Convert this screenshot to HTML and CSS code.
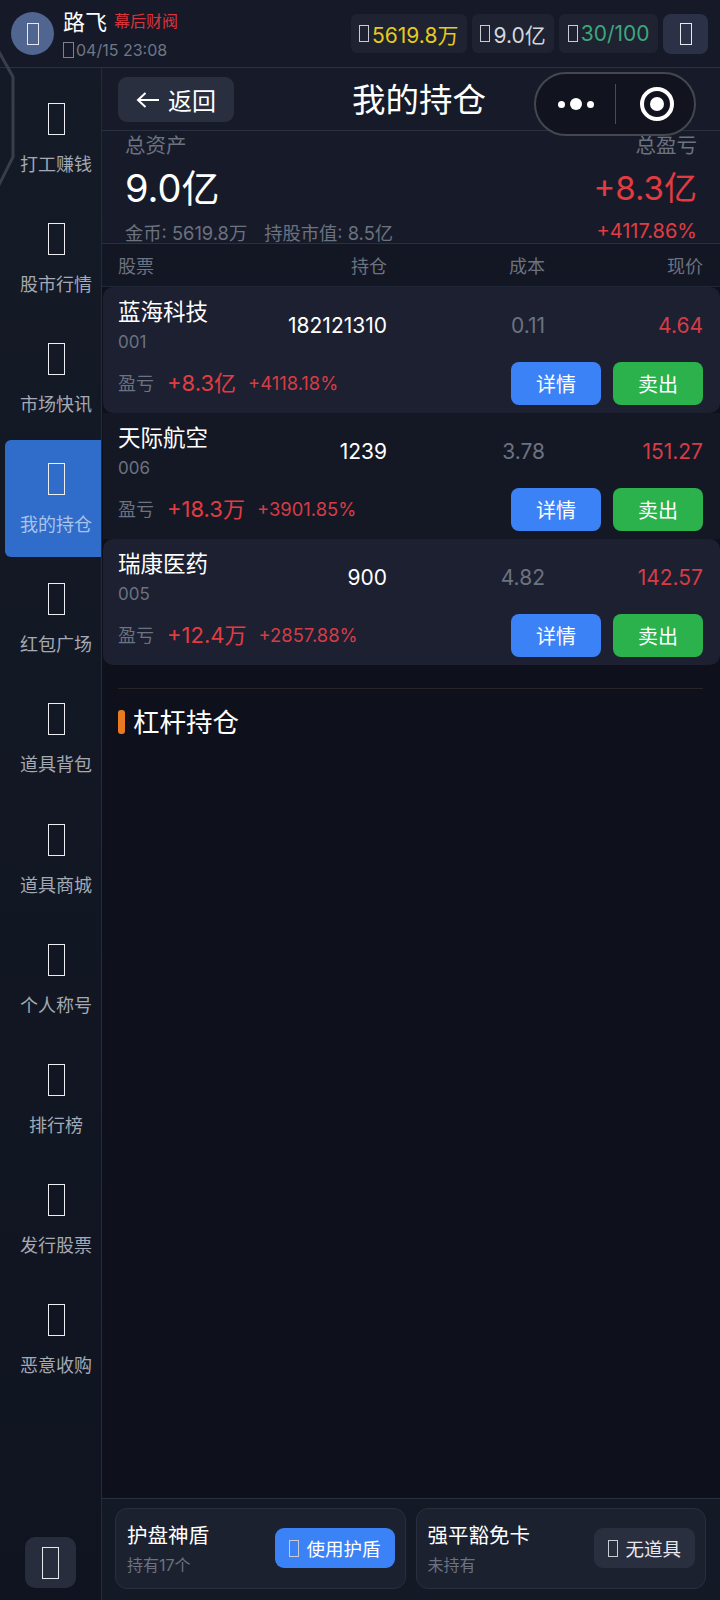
FILE: index.html
```html
<!DOCTYPE html>
<html lang="zh-CN">
<head>
    <meta charset="UTF-8">
    <title>我的持仓</title>
    <link rel="stylesheet" href="styles.css">
</head>
<body>
<div class="app">
    <svg class="octagon" width="16" height="140" viewBox="0 0 16 140">
        <path d="M-2 0 L13 27 V107 L-2 137" fill="none" stroke="#3a3e4a" stroke-width="3"/>
    </svg>

    <header class="topbar">
        <div class="avatar"><i class="tofu tofu-md"></i></div>
        <div class="user">
            <div class="user-line">
                <span class="user-name">路飞</span>
                <span class="user-tag">幕后财阀</span>
            </div>
            <div class="user-time"><i class="tofu tofu-xs"></i>04/15 23:08</div>
        </div>
        <div class="chips">
            <div class="chip chip-gold"><i class="tofu tofu-sm"></i>5619.8万</div>
            <div class="chip"><i class="tofu tofu-sm"></i>9.0亿</div>
            <div class="chip chip-green"><i class="tofu tofu-sm"></i>30/100</div>
            <div class="chip-btn"><i class="tofu tofu-md"></i></div>
        </div>
    </header>

    <div class="body">
        <nav class="sidebar">
            <a class="nav-item"><i class="tofu tofu-lg"></i><span>打工赚钱</span></a>
            <a class="nav-item"><i class="tofu tofu-lg"></i><span>股市行情</span></a>
            <a class="nav-item"><i class="tofu tofu-lg"></i><span>市场快讯</span></a>
            <a class="nav-item active"><i class="tofu tofu-lg"></i><span>我的持仓</span></a>
            <a class="nav-item"><i class="tofu tofu-lg"></i><span>红包广场</span></a>
            <a class="nav-item"><i class="tofu tofu-lg"></i><span>道具背包</span></a>
            <a class="nav-item"><i class="tofu tofu-lg"></i><span>道具商城</span></a>
            <a class="nav-item"><i class="tofu tofu-lg"></i><span>个人称号</span></a>
            <a class="nav-item"><i class="tofu tofu-lg"></i><span>排行榜</span></a>
            <a class="nav-item"><i class="tofu tofu-lg"></i><span>发行股票</span></a>
            <a class="nav-item"><i class="tofu tofu-lg"></i><span>恶意收购</span></a>
            <div class="side-btn"><i class="tofu tofu-lg"></i></div>
        </nav>

        <main class="main">
            <div class="titlebar">
                <a class="back">
                    <svg class="back-arrow" width="24" height="18" viewBox="0 0 24 18">
                        <path d="M23 9 H2 M9.5 2 L2 9 L9.5 16" fill="none" stroke="#fff" stroke-width="2"/>
                    </svg>返回
                </a>
                <h1 class="page-title">我的持仓</h1>
            </div>

            <section class="summary">
                <div class="summary-left">
                    <div class="label">总资产</div>
                    <div class="total">9.0亿</div>
                    <div class="sub">金币: 5619.8万<span class="sub-gap">持股市值: 8.5亿</span></div>
                </div>
                <div class="summary-right">
                    <div class="label">总盈亏</div>
                    <div class="total total-pl red">+8.3亿</div>
                    <div class="percent red">+4117.86%</div>
                </div>
            </section>

            <div class="table-head">
                <span>股票</span><span>持仓</span><span>成本</span><span>现价</span>
            </div>

            <article class="stock">
                <div class="stock-top">
                    <div class="stock-name">蓝海科技<small>001</small></div>
                    <div class="qty">182121310</div>
                    <div class="cost">0.11</div>
                    <div class="price">4.64</div>
                </div>
                <div class="stock-bottom">
                    <span class="pl-label">盈亏</span>
                    <span class="pl-value">+8.3亿</span>
                    <span class="pl-rate">+4118.18%</span>
                    <a class="btn btn-blue">详情</a>
                    <a class="btn btn-green">卖出</a>
                </div>
            </article>
            <article class="stock stock-alt">
                <div class="stock-top">
                    <div class="stock-name">天际航空<small>006</small></div>
                    <div class="qty">1239</div>
                    <div class="cost">3.78</div>
                    <div class="price">151.27</div>
                </div>
                <div class="stock-bottom">
                    <span class="pl-label">盈亏</span>
                    <span class="pl-value">+18.3万</span>
                    <span class="pl-rate">+3901.85%</span>
                    <a class="btn btn-blue">详情</a>
                    <a class="btn btn-green">卖出</a>
                </div>
            </article>
            <article class="stock">
                <div class="stock-top">
                    <div class="stock-name">瑞康医药<small>005</small></div>
                    <div class="qty">900</div>
                    <div class="cost">4.82</div>
                    <div class="price">142.57</div>
                </div>
                <div class="stock-bottom">
                    <span class="pl-label">盈亏</span>
                    <span class="pl-value">+12.4万</span>
                    <span class="pl-rate">+2857.88%</span>
                    <a class="btn btn-blue">详情</a>
                    <a class="btn btn-green">卖出</a>
                </div>
            </article>

            <div class="divider"></div>
            <h2 class="section-title">杠杆持仓</h2>

            <footer class="footer">
                <div class="prop">
                    <div class="prop-text">
                        <div class="prop-name">护盘神盾</div>
                        <div class="prop-sub">持有17个</div>
                    </div>
                    <a class="prop-btn prop-blue"><i class="tofu tofu-sm"></i>使用护盾</a>
                </div>
                <div class="prop">
                    <div class="prop-text">
                        <div class="prop-name">强平豁免卡</div>
                        <div class="prop-sub">未持有</div>
                    </div>
                    <a class="prop-btn prop-gray"><i class="tofu tofu-sm"></i>无道具</a>
                </div>
            </footer>
        </main>
    </div>

    <div class="capsule">
        <div class="capsule-dots"><b></b><b class="big"></b><b></b></div>
        <div class="capsule-line"></div>
        <div class="capsule-ring"><b></b></div>
    </div>
</div>
</body>
</html>
```

FILE: styles.css
```css
*{
    margin: 0;
    padding: 0;
    box-sizing: border-box;
}
html,body{
    background: #0e111c;
}
.app{
    width: 720px;
    height: 1600px;
    position: relative;
    overflow: hidden;
    display: flex;
    flex-direction: column;
    color: #fff;
    font-family: Inter, "Noto Sans CJK SC", sans-serif;
}

/* missing glyph boxes */
.tofu{
    display: inline-block;
    border: 1.5px solid #e6e8ee;
    flex: none;
}
.tofu-xs{
    width: 11px;
    height: 16px;
    border-width: 1px;
    border-color: #7b818f;
    margin-right: 2px;
}
.tofu-sm{
    width: 10px;
    height: 17px;
    border-width: 1px;
    border-color: #c9ccd4;
    margin-right: 3px;
}
.tofu-md{
    width: 12px;
    height: 22px;
}
.tofu-lg{
    width: 17px;
    height: 32px;
}

.octagon{
    position: absolute;
    left: 0;
    top: 50px;
}

/* top */
.topbar{
    height: 68px;
    flex: none;
    display: flex;
    align-items: center;
    padding: 0 12px 0 11px;
    background: #161a28;
    border-bottom: 1px solid #2b3040;
}
.avatar{
    width: 43px;
    height: 43px;
    border-radius: 50%;
    background: #50658f;
    display: flex;
    align-items: center;
    justify-content: center;
    margin-right: 9px;
}
.user-line{
    display: flex;
    align-items: center;
    gap: 7px;
    height: 26px;
}
.user-name{
    font-size: 22px;
}
.user-tag{
    font-size: 16px;
    color: #d9333c;
}
.user-time{
    display: flex;
    align-items: center;
    font-size: 16px;
    color: #6f7684;
    margin-top: 7px;
}
.chips{
    margin-left: auto;
    display: flex;
    align-items: center;
    gap: 5px;
}
.chip{
    height: 39px;
    padding: 0 8.5px;
    display: flex;
    align-items: center;
    background: #1e2231;
    border-radius: 6px;
    font-size: 21px;
    color: #d4d7de;
}
.chip-gold{
    color: #e5c91c;
}
.chip-green{
    color: #3ea67c;
}
.chip-btn{
    width: 45px;
    height: 40px;
    background: #2b3247;
    border-radius: 8px;
    display: flex;
    align-items: center;
    justify-content: center;
}

.body{
    flex: 1;
    display: flex;
    min-height: 0;
}

/* left nav */
.sidebar{
    width: 102px;
    flex: none;
    padding: 11.5px 0 12px 5px;
    display: flex;
    flex-direction: column;
    gap: 3.2px;
    background: linear-gradient(#151a27, #0f1420);
    border-right: 1px solid #262b3a;
}
.nav-item{
    height: 117px;
    flex: none;
    display: flex;
    flex-direction: column;
    align-items: center;
    padding: 23px 0 0 6px;
    border-radius: 6px 0 0 6px;
    color: #a4a9b4;
    font-size: 18px;
}
.nav-item span{
    margin-top: 18px;
    line-height: 24px;
}
.nav-item .tofu{
    border-color: #eceef2;
}
.nav-item.active{
    background: #306dcb;
    color: #a9c3ea;
}
.side-btn{
    width: 51px;
    height: 51px;
    margin: auto 0 0 20px;
    background: #272d3c;
    border-radius: 10px;
    display: flex;
    align-items: center;
    justify-content: center;
}

/* main */
.main{
    flex: 1;
    min-width: 0;
    display: flex;
    flex-direction: column;
    background: #0e111c;
}
.titlebar{
    height: 63px;
    flex: none;
    display: flex;
    align-items: center;
    position: relative;
    padding-left: 16px;
    background: #171b29;
    border-bottom: 1px solid #2b3040;
}
.back{
    width: 116px;
    height: 45px;
    margin-top: 1px;
    display: flex;
    align-items: center;
    justify-content: center;
    background: #2a2f3f;
    border-radius: 9px;
    font-size: 24px;
}
.back-arrow{
    margin-right: 8px;
}
.page-title{
    position: absolute;
    left: 250px;
    margin-bottom: 4px;
    font-size: 33.5px;
    font-weight: 400;
}
.summary{
    height: 113px;
    flex: none;
    display: flex;
    justify-content: space-between;
    padding: 1px 23px 0 23px;
    background: #171b29;
    border-bottom: 1px solid #2b3040;
}
.summary-right{
    text-align: right;
}
.label{
    font-size: 20.5px;
    line-height: 28px;
    color: #6b7280;
}
.total{
    font-size: 38px;
    line-height: 52px;
    margin-top: 2px;
}
.total-pl{
    font-size: 33px;
}
.sub{
    font-size: 18.3px;
    line-height: 26px;
    color: #6b7280;
    margin-top: 6px;
}
.sub-gap{
    margin-left: 17px;
}
.percent{
    font-size: 20px;
    line-height: 26px;
    margin-top: 4px;
}
.red{
    color: #e23c42;
}
.table-head{
    height: 43px;
    flex: none;
    display: grid;
    grid-template-columns: 111px 158px 158px 158px;
    align-items: center;
    padding: 0 17px 0 16px;
    font-size: 18px;
    color: #6b7280;
    background: #131724;
    border-bottom: 1px solid #232838;
}
.table-head span{
    text-align: right;
}
.table-head span:first-child{
    text-align: left;
}

/* stock rows */
.stock{
    height: 126px;
    flex: none;
    margin-left: 1px;
    padding: 7px 17px 0 15px;
    background: #1c2030;
    border-radius: 10px;
}
.stock-alt{
    background: #141824;
    border-radius: 0;
}
.stock-top{
    display: grid;
    grid-template-columns: 111px 158px 158px 158px;
    align-items: center;
    height: 62px;
}
.stock-top > div{
    text-align: right;
    font-size: 21px;
}
.stock-top > .stock-name{
    text-align: left;
    font-size: 22.5px;
    line-height: 30px;
    white-space: nowrap;
}
.stock-name small{
    display: block;
    font-size: 17px;
    line-height: 24px;
    margin-top: 3px;
    color: #6b7280;
}
.cost{
    color: #6b7280;
}
.price{
    color: #d63c46;
}
.stock-bottom{
    display: flex;
    align-items: center;
    height: 43px;
    margin-top: 6px;
}
.pl-label{
    font-size: 18px;
    color: #6b7280;
    margin: 0 13px 4px 0;
}
.pl-value{
    font-size: 22px;
    color: #e23c42;
    margin: 0 12px 5px 0;
}
.pl-rate{
    font-size: 18.4px;
    color: #d63c46;
    margin: 0 auto 2px 0;
}
.btn{
    width: 90px;
    height: 43px;
    display: flex;
    align-items: center;
    justify-content: center;
    border-radius: 8px;
    font-size: 20px;
}
.btn-blue{
    background: #3b82f6;
}
.btn-green{
    background: #2bb24c;
    margin-left: 12px;
}
.divider{
    height: 1px;
    flex: none;
    margin: 23px 17px 0 16px;
    background: #272528;
}
.section-title{
    margin: 18px 0 0 16px;
    padding-left: 15px;
    font-size: 26.5px;
    line-height: 30px;
    font-weight: 400;
    position: relative;
}
.section-title::before{
    content: "";
    position: absolute;
    left: 0;
    top: 3px;
    width: 7px;
    height: 24px;
    border-radius: 3px;
    background: #e87a22;
}

/* bottom */
.footer{
    margin-top: auto;
    height: 102px;
    flex: none;
    display: flex;
    gap: 10px;
    padding: 9px 14px 0 13px;
    background: #141926;
    border-top: 1px solid #2b3040;
}
.prop{
    flex: 1;
    height: 81px;
    display: flex;
    align-items: center;
    justify-content: space-between;
    padding: 0 10px 0 11px;
    background: #1c2130;
    border: 1px solid #2a2f3f;
    border-radius: 12px;
}
.prop-name{
    font-size: 20.5px;
    line-height: 30px;
}
.prop-sub{
    font-size: 16px;
    line-height: 24px;
    color: #6b7280;
    margin-top: 2px;
}
.prop-btn{
    height: 40px;
    margin-bottom: 1px;
    padding: 0 14px;
    display: flex;
    align-items: center;
    gap: 4px;
    border-radius: 9px;
    font-size: 18.5px;
}
.prop-btn .tofu{
    margin-right: 3px;
}
.prop-blue{
    background: #3b82f6;
}
.prop-gray{
    background: #2a2f3f;
    color: #e6e8ee;
}

/* wechat capsule */
.capsule{
    position: absolute;
    left: 534px;
    top: 72px;
    width: 162px;
    height: 64px;
    display: flex;
    align-items: center;
    background: #11131e;
    border: 2px solid #45474f;
    border-radius: 32px;
}
.capsule-dots{
    width: 79px;
    display: flex;
    align-items: center;
    justify-content: center;
    gap: 5px;
}
.capsule-dots b{
    width: 7px;
    height: 7px;
    border-radius: 50%;
    background: #fff;
}
.capsule-dots b.big{
    width: 12px;
    height: 12px;
}
.capsule-line{
    width: 1px;
    height: 40px;
    background: #4a4c55;
}
.capsule-ring{
    width: 34px;
    height: 34px;
    margin-left: 24px;
    border: 4px solid #fff;
    border-radius: 50%;
    display: flex;
    align-items: center;
    justify-content: center;
}
.capsule-ring b{
    width: 14px;
    height: 14px;
    border-radius: 50%;
    background: #fff;
}
```
